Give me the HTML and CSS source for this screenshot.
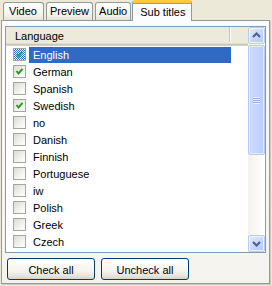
FILE: index.html
```html
<!DOCTYPE html>
<html lang="en">
<head>
    <meta charset="UTF-8">
    <title>Sub titles</title>
    <link rel="stylesheet" href="styles.css">
</head>
<body>
    <div class="window">
        <div class="tabs">
            <div class="tab tab-video">Video</div>
            <div class="tab">Preview</div>
            <div class="tab">Audio</div>
            <div class="tab active">Sub titles</div>
        </div>

        <div class="panel">
            <div class="listview">
                <div class="list-body">
                    <div class="list-header">
                        <div class="col-header">Language</div>
                        <div class="col-rest"></div>
                    </div>
                    <div class="row"><span class="check checked focused"><svg viewBox="0 0 11 11"><path d="M2.5 5 L4.5 7.5 L8.5 2.8"/></svg></span><span class="label selected">English</span></div>
                    <div class="row"><span class="check checked"><svg viewBox="0 0 11 11"><path d="M2.5 5 L4.5 7.5 L8.5 2.8"/></svg></span><span class="label">German</span></div>
                    <div class="row"><span class="check"></span><span class="label">Spanish</span></div>
                    <div class="row"><span class="check checked"><svg viewBox="0 0 11 11"><path d="M2.5 5 L4.5 7.5 L8.5 2.8"/></svg></span><span class="label">Swedish</span></div>
                    <div class="row"><span class="check"></span><span class="label">no</span></div>
                    <div class="row"><span class="check"></span><span class="label">Danish</span></div>
                    <div class="row"><span class="check"></span><span class="label">Finnish</span></div>
                    <div class="row"><span class="check"></span><span class="label">Portuguese</span></div>
                    <div class="row"><span class="check"></span><span class="label">iw</span></div>
                    <div class="row"><span class="check"></span><span class="label">Polish</span></div>
                    <div class="row"><span class="check"></span><span class="label">Greek</span></div>
                    <div class="row"><span class="check"></span><span class="label">Czech</span></div>
                </div>

                <div class="scrollbar">
                    <div class="sb-btn"><svg viewBox="0 0 15 15"><path d="M4 9 L7.5 5.5 L11 9"/></svg></div>
                    <div class="sb-track">
                        <div class="sb-thumb">
                            <div class="grip"></div>
                        </div>
                    </div>
                    <div class="sb-btn"><svg viewBox="0 0 15 15"><path d="M4 6 L7.5 9.5 L11 6"/></svg></div>
                </div>
            </div>

            <div class="buttons">
                <button class="btn">Check all</button>
                <button class="btn">Uncheck all</button>
            </div>
        </div>
    </div>
</body>
</html>
```

FILE: styles.css
```css
* { margin: 0; padding: 0; box-sizing: border-box; }

body { background: #ece9d8; font-family: 'Liberation Sans', Arial, sans-serif; font-size: 11px; color: #000; width: 272px; height: 286px; overflow: hidden; }

.window { padding: 0 2px 0 1px; }

.tabs { display: flex; align-items: flex-end; height: 20px; padding-left: 2px; gap: 2px; position: relative; z-index: 1; }

.tab { height: 18px; padding: 2px 3px 0; border: 1px solid #919b9c; border-bottom: none; border-radius: 3px 3px 0 0; background: linear-gradient(#ffffff, #f3f2ec 70%, #e6e4d8); white-space: nowrap; }

.tab-video { padding: 2px 6px 0 5px; }

.active { height: 21px; margin-left: -1px; margin-bottom: -1px; padding: 3px 6px 0 7px; background: #fcfcfe; border-top: 3px solid #ffc83c; box-shadow: inset 0 1px 0 #e68b2c; border-radius: 3px 3px 0 0; }

.panel { height: 264px; border: 1px solid #919b9c; box-shadow: 1px 1px 0 #d0cdbf; background: linear-gradient(#fcfcfe, #f4f3ee); padding: 5px 0 0 3px; }

.listview { display: flex; width: 261px; height: 227px; border: 1px solid #7f9db9; background: #fff; }

.list-body { flex: 1; }

.list-header { display: flex; height: 19px; background: #ebeadb; box-shadow: inset 0 -1px 0 #d6d2c2, inset 0 -2px 0 #cbc7b8, inset 0 -3px 0 #e2dfd0; }

.col-header { width: 224px; padding: 3px 0 0 9px; border-right: 1px solid #c7c5b2; box-shadow: 1px 0 0 #fff; margin: 0 0 4px; height: 15px; }

.col-rest { flex: 1; }

.row { display: flex; align-items: center; height: 17px; padding-left: 7px; }

.check { width: 13px; height: 13px; border: 1px solid #a6a69c; background: linear-gradient(135deg, #dcdcd4, #f6f6f3 70%, #fff); display: flex; }

.check svg { width: 11px; height: 11px; fill: none; stroke: #21a121; stroke-width: 2; }

.focused { background: repeating-conic-gradient(#316ac5 0 25%, #ffffff 0 50%) 0 0 / 2px 2px; }

.focused svg { stroke: #2a9a55; }

.label { margin-left: 3px; height: 16px; padding: 2px 0 0 4px; }

.selected { width: 202px; background: #316ac5; color: #fff; margin-left: 3px; }

.scrollbar { width: 17px; display: flex; flex-direction: column; background: linear-gradient(90deg, #f3f1ec, #fefefe); }

.sb-btn { height: 17px; border: 1px solid #b7c9f4; border-radius: 2px; background: linear-gradient(135deg, #e6eefc, #c2d3fc 60%, #b5c9f6); display: flex; align-items: center; justify-content: center; box-shadow: inset 0 0 0 1px #f0f4fe; }

.sb-btn svg { width: 15px; height: 15px; fill: none; stroke: #4d6185; stroke-width: 2; }

.sb-track { flex: 1; padding: 1px 0; }

.sb-thumb { height: 110px; border: 1px solid #b7c9f4; border-radius: 2px; background: linear-gradient(90deg, #cddbfc, #c4d5fc 50%, #b8cbf8); box-shadow: inset 0 0 0 1px #e4ebfd; display: flex; align-items: center; justify-content: center; }

.grip { width: 7px; height: 7px; background: repeating-linear-gradient(#eef3fe 0 1px, #8caae6 1px 2px); }

.buttons { display: flex; gap: 6px; margin: 5px 0 0 2px; }

.btn { width: 88px; height: 22px; border: 1px solid #003c74; border-radius: 3px; background: linear-gradient(#ffffff, #f5f4ef 60%, #e3e0d4 90%, #d6d0c5); font-family: 'Liberation Sans', Arial, sans-serif; font-size: 11px; color: #000; padding-top: 1px; }
```
